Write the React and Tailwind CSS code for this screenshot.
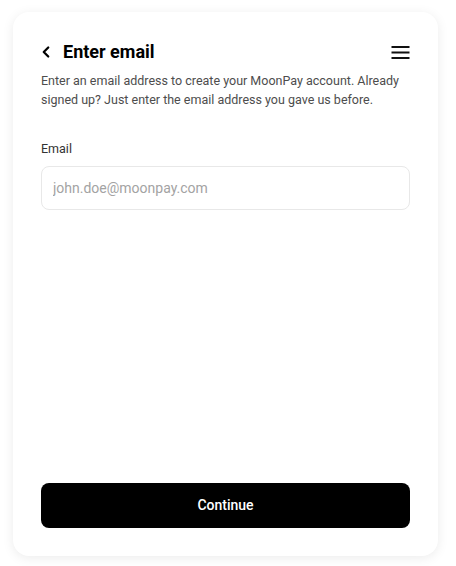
import { ChevronLeft } from 'lucide-react';

const Menu = () => (
  <svg width="19" height="13" viewBox="0 0 19 13" fill="none">
    <path d="M0.5 1h18M0.5 6.5h18M0.5 12h18" stroke="#111" strokeWidth="1.8" />
  </svg>
);

export default function App() {
  return (
    <div className="min-h-[566px] bg-white pt-[12px] pl-[13px]" style={{ fontFamily: 'Roboto, "Liberation Sans", sans-serif' }}>
      <div className="flex h-[544px] w-[425px] flex-col rounded-2xl bg-white px-[28px] pt-[29px] pb-[28px] shadow-[0_2px_12px_rgba(0,0,0,0.08)]">
        {/* Header */}
        <div className="flex h-[22px] items-center justify-between">
          <div className="flex items-center">
            <ChevronLeft className="-ml-[4px] h-[18px] w-[18px] text-black" strokeWidth={3} />
            <h1 className="ml-[8px] text-[18px] font-bold leading-[22px] text-black">Enter email</h1>
          </div>
          <Menu />
        </div>

        <p className="mt-[9px] text-[12.5px] leading-[18.5px] text-[#4d4d4d]">
          Enter an email address to create your MoonPay account. Already signed up? Just enter the email address you gave us before.
        </p>

        <label className="mt-[31px] text-[12.5px] leading-[18px] text-[#333]">Email</label>
        <input
          type="email"
          placeholder="john.doe@moonpay.com"
          className="mt-[8px] h-[44px] w-full rounded-lg border border-[#e8e8e8] px-[11px] text-[14px] text-black outline-none placeholder:text-[#a3a3a3]"
        />

        <div className="flex-1" />

        <button className="h-[45px] w-full rounded-lg bg-black text-[14px] font-medium text-white">
          Continue
        </button>
      </div>
    </div>
  );
}
